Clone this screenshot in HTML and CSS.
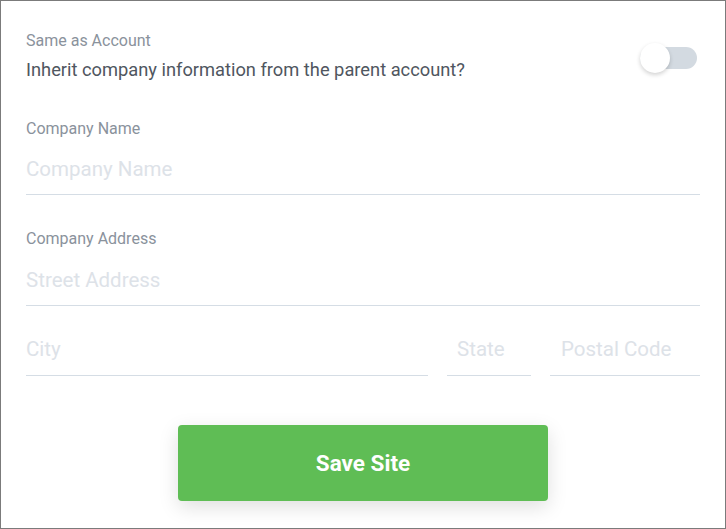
FILE: index.html
```html
<!DOCTYPE html>
<html>
<head>
<meta charset="utf-8">
<link rel="stylesheet" href="styles.css">
</head>
<body>
<div class="frame">
  <div class="inherit">
    <div class="inherit-text">
      <div class="label">Same as Account</div>
      <div class="question">Inherit company information from the parent account?</div>
    </div>
    <div class="toggle"><span class="knob"></span></div>
  </div>

  <div class="field">
    <div class="label">Company Name</div>
    <div class="input">Company Name</div>
  </div>

  <div class="field addr">
    <div class="label">Company Address</div>
    <div class="input">Street Address</div>
  </div>

  <div class="row">
    <div class="input city">City</div>
    <div class="input state">State</div>
    <div class="input postal">Postal Code</div>
  </div>

  <div class="actions">
    <button class="save">Save Site</button>
  </div>
</div>
</body>
</html>
```
FILE: styles.css
```css
* { box-sizing: border-box; }
html, body { margin: 0; padding: 0; background: #fff; }
body { font-family: Roboto, "Noto Sans", sans-serif; }
.frame {
  width: 726px;
  height: 529px;
  border: 1px solid #7b7b7b;
  padding: 30px 25px 0 25px;
  background: #fff;
}
.inherit {
  display: flex;
  align-items: flex-start;
  justify-content: space-between;
}
.label {
  font-size: 16px;
  line-height: 20px;
  color: #8a929c;
}
.question {
  margin-top: 9px;
  font-size: 18.3px;
  line-height: 20px;
  color: #4f5660;
}
.toggle {
  position: relative;
  width: 57px;
  height: 22px;
  border-radius: 11px;
  background: #d3dae1;
  margin-top: 16px;
  margin-right: 3px;
}
.knob {
  position: absolute;
  left: 0;
  top: -4px;
  width: 30px;
  height: 30px;
  border-radius: 50%;
  background: #fff;
  box-shadow: 0 2px 4px rgba(0,0,0,0.18);
}
.field { margin-top: 39px; }
.field.addr { margin-top: 34px; }
.field.addr .input { padding-top: 19px; }
.input {
  font-size: 20.5px;
  line-height: 24px;
  color: #dde2e8;
  padding: 18px 0 13px 0;
  border-bottom: 1px solid #d5dde5;
}
.row {
  display: flex;
  gap: 19px;
  margin-top: 15px;
}
.row .input { padding-top: 16px; padding-bottom: 14px; }
.city { flex: 0 0 402px; }
.state { flex: 0 0 84px; padding-left: 10px; }
.postal { flex: 1; padding-left: 11px; }
.actions {
  display: flex;
  justify-content: center;
  margin-top: 49px;
}
.save {
  width: 370px;
  height: 76px;
  border: none;
  border-radius: 4px;
  background: #5fbd55;
  color: #fff;
  font-family: Roboto, "Noto Sans", sans-serif;
  font-size: 22.5px;
  font-weight: 700;
  box-shadow: 0 6px 20px rgba(0,0,0,0.13);
}
```
